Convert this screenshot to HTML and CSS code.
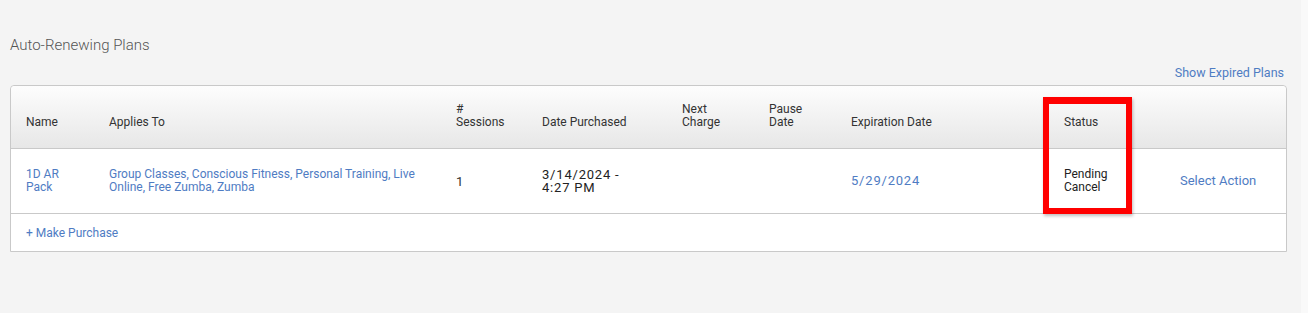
FILE: index.html
```html
<!DOCTYPE html>
<html lang="en">
<head>
    <meta charset="UTF-8">
    <meta name="viewport" content="width=device-width, initial-scale=1.0">
    <title>Auto-Renewing Plans</title>
    <link rel="stylesheet" href="styles.css">
</head>
<body>

<div class="page">
    <h2 class="section-title">Auto-Renewing Plans</h2>

    <div class="toolbar">
        <a href="#" class="link">Show Expired Plans</a>
    </div>

    <div class="plans">
        <table class="plans-table">
            <colgroup>
                <col style="width: 83px">
                <col style="width: 347px">
                <col style="width: 86px">
                <col style="width: 140px">
                <col style="width: 87px">
                <col style="width: 82px">
                <col style="width: 213px">
                <col style="width: 116px">
                <col>
            </colgroup>
            <thead>
                <tr>
                    <th>Name</th>
                    <th>Applies To</th>
                    <th>#<br>Sessions</th>
                    <th>Date Purchased</th>
                    <th>Next<br>Charge</th>
                    <th>Pause<br>Date</th>
                    <th>Expiration Date</th>
                    <th>Status</th>
                    <th></th>
                </tr>
            </thead>
            <tbody>
                <tr>
                    <td><a href="#" class="link">1D AR<br>Pack</a></td>
                    <td><a href="#" class="link">Group Classes, Conscious Fitness, Personal Training, Live Online, Free Zumba, Zumba</a></td>
                    <td class="num">1</td>
                    <td class="dark digits">3/14/2024 -<br>4:27 PM</td>
                    <td></td>
                    <td></td>
                    <td><a href="#" class="link digits">5/29/2024</a></td>
                    <td class="dark">Pending<br>Cancel</td>
                    <td><a href="#" class="link action">Select Action</a></td>
                </tr>
                <tr class="footer-row">
                    <td colspan="9"><a href="#" class="link">+ Make Purchase</a></td>
                </tr>
            </tbody>
        </table>

        <!-- annotation box round the status column -->
        <div class="highlight"></div>
    </div>
</div>

</body>
</html>
```

FILE: styles.css
```css
html {
    background: linear-gradient(to right, #f4f4f4 1301px, #f9f9f9 1301px);
}

body {
    font-family: Roboto, "Liberation Sans", Arial, sans-serif;
    font-size: 12px;
    margin: 0;
    padding: 0;
    color: #333;
    min-height: 313px;
}

.page {
    padding: 0 21px 0 10px;
}

.section-title {
    margin: 37px 0 0;
    font-size: 15px;
    font-weight: 300;
    line-height: 16px;
    color: #555;
}

.toolbar {
    display: flex;
    justify-content: flex-end;
    margin-top: 13px;
    padding-right: 3px;
    line-height: 14px;
    margin-bottom: 5px;
    font-size: 12.5px;
}

.link {
    color: #4f7cc3;
    text-decoration: none;
}

.plans {
    position: relative;
}

.plans-table {
    width: 100%;
    table-layout: fixed;
    border-collapse: separate;
    border-spacing: 0;
    background: white;
    border: 1px solid #c9c9c9;
    border-radius: 4px 4px 0 0;
}

.plans-table th {
    height: 63px;
    box-sizing: border-box;
    padding: 0 15px 19px;
    vertical-align: bottom;
    text-align: left;
    font-weight: 400;
    line-height: 13px;
    color: #333;
    background: linear-gradient(#fdfdfd, #e7e7e7);
    border-bottom: 1px solid #c9c9c9;
}

.plans-table th:first-child {
    border-top-left-radius: 4px;
}

.plans-table th:last-child {
    border-top-right-radius: 4px;
}

.plans-table td {
    height: 65px;
    box-sizing: border-box;
    padding: 0 15px;
    vertical-align: middle;
    line-height: 13px;
    border-bottom: 1px solid #c9c9c9;
}

.plans-table td.dark {
    color: #222;
}

.plans-table td.num {
    color: #333;
    font-size: 13px;
}

.digits {
    font-size: 13px;
    letter-spacing: 0.8px;
}

.action {
    font-size: 13px;
}

.plans-table .footer-row td {
    height: 37px;
    border-bottom: none;
    padding-top: 1px;
}

.highlight {
    position: absolute;
    left: 1033px;
    top: 12px;
    width: 89px;
    height: 117px;
    box-sizing: border-box;
    border: 6px solid #ff0000;
    border-top-width: 7px;
    box-shadow: 1px 2px 3px rgba(0, 0, 0, 0.25);
}
```
